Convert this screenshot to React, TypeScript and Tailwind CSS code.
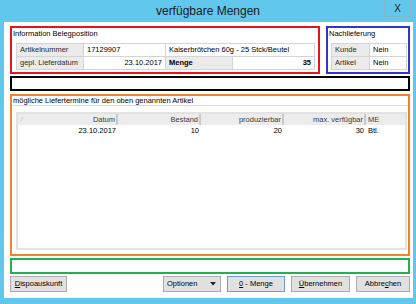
import React from 'react';

const Cell: React.FC<{ label?: boolean; right?: boolean; bold?: boolean; span?: boolean; children?: React.ReactNode }> = ({ label, right, bold, span, children }) => (
  <div
    className={`h-[13px] leading-[12px] px-[3px] border-r border-b border-[#d4d4d4] whitespace-nowrap overflow-hidden ${
      label ? 'bg-[#ebebeb] text-[#2a2a2a]' : 'bg-white text-black'
    } ${right ? 'text-right' : ''} ${bold ? 'font-bold' : ''} ${span ? 'col-span-2' : ''}`}
  >
    {children}
  </div>
);

const Btn: React.FC<{ w: string; focus?: boolean; children: React.ReactNode }> = ({ w, focus, children }) => (
  <div
    className={`${w} h-[16px] flex items-center justify-center bg-[#e1e1e1] border ${
      focus ? 'border-[#6f9cce]' : 'border-[#adadad]'
    } text-black`}
  >
    {children}
  </div>
);

const headCols = [
  { t: 'Datum', w: 'w-[100px]' },
  { t: 'Bestand', w: 'w-[83px]' },
  { t: 'produzierbar', w: 'w-[83px]' },
  { t: 'max. verfügbar', w: 'w-[82px]' },
];

export default function App() {
  return (
    <div className="w-[416px] h-[304px] bg-[#62c7ec] flex flex-col overflow-hidden font-['Liberation_Sans',Arial,sans-serif] text-[7.5px] text-black">
      {/* title bar */}
      <div className="h-[22px] flex items-start shrink-0">
        <div className="w-[32px]" />
        <div className="flex-1 text-center text-[12px] leading-[22px] text-[#1a1a1a]">verfügbare Mengen</div>
        <div className="w-[32px] pr-[5px]">
          <div className="w-[27px] h-[17px] border border-[#86b8cc] border-t-0 flex items-center justify-center text-[10px] text-[#222]">
            X
          </div>
        </div>
      </div>

      {/* body */}
      <div className="ml-[4px] mr-[3px] mb-[6px] flex-1 bg-white flex flex-col pl-[6px] pr-[3px] pt-[4px] pb-[6px]">
        <div className="flex gap-[6px] h-[48px]">
          <div className="w-[310px] border-2 border-[#e3141c] flex flex-col">
            <div className="h-[11px] leading-[11px] pl-[1px]">Information Belegposition</div>
            <div className="mt-[4px] ml-[4px] mr-[3px] grid grid-cols-[67px_82px_67px_1fr] border-t border-l border-[#d4d4d4]">
              <Cell label>Artikelnummer</Cell>
              <Cell>17129907</Cell>
              <Cell span>Kaiserbrötchen 60g - 25 Stck/Beutel</Cell>
              <Cell label>gepl. Lieferdatum</Cell>
              <Cell right>23.10.2017</Cell>
              <Cell label bold>
                <span className="text-black">Menge</span>
              </Cell>
              <Cell right bold>35</Cell>
            </div>
          </div>
          <div className="flex-1 border-2 border-[#3334c9] flex flex-col">
            <div className="h-[11px] leading-[11px] pl-[1px]">Nachlieferung</div>
            <div className="mt-[4px] ml-[3px] mr-[1px] grid grid-cols-[38px_1fr] border-t border-l border-[#d4d4d4]">
              <Cell label>Kunde</Cell>
              <Cell>Nein</Cell>
              <Cell label>Artikel</Cell>
              <Cell>Nein</Cell>
            </div>
          </div>
        </div>

        <div className="mt-[2px] h-[15px] border-2 border-black" />

        <div className="mt-[3px] h-[162px] border-2 border-[#f4812c] flex flex-col">
          <div className="h-[9px] leading-[9px] pl-[1px]">mögliche Liefertermine für den oben genannten Artikel</div>
          <div className="flex-1 border-t border-[#d9d9d9] pt-[6px] pl-[4px] pr-[1px] pb-[4px] flex">
            <div className="flex-1 border-2 border-[#e2e2e2] flex flex-col">
              <div className="h-[11px] flex bg-[#ececec] text-[#3d3d3d] leading-[11px]">
                {headCols.map((c, i) => (
                  <div key={c.t} className={`${c.w} relative text-right pr-[1px] border-r-2 border-[#c9c9c9]`}>
                    {i === 0 && <span className="absolute left-[3px] top-0 text-[6px] text-[#aaa]">/</span>}
                    {c.t}
                  </div>
                ))}
                <div className="flex-1 pl-[2px]">ME</div>
              </div>
              <div className="h-[12px] flex leading-[12px] text-black">
                <div className="w-[100px] text-right pr-[2px]">23.10.2017</div>
                <div className="w-[83px] text-right pr-[2px]">10</div>
                <div className="w-[83px] text-right pr-[2px]">20</div>
                <div className="w-[82px] text-right pr-[2px]">30</div>
                <div className="flex-1 pl-[2px]">Btl.</div>
              </div>
            </div>
          </div>
        </div>

        <div className="mt-[2px] h-[16px] border-2 border-[#22b14c]" />

        <div className="mt-[2px] h-[16px] flex">
          <Btn w="w-[57px]">
            <span>
              <span className="underline">D</span>ispoauskunft
            </span>
          </Btn>
          <div className="flex-1" />
          <div className="w-[58px] h-[16px] flex items-center bg-[#e1e1e1] border border-[#adadad] pl-[3px] pr-[4px]">
            <span className="flex-1">Optionen</span>
            <svg width="6" height="4" viewBox="0 0 6 4">
              <path d="M0 0 H6 L3 3.5 Z" fill="#222" />
            </svg>
          </div>
          <div className="w-[6px]" />
          <Btn w="w-[58px]" focus>
            <span>
              <span className="underline">0</span> - Menge
            </span>
          </Btn>
          <div className="w-[6px]" />
          <Btn w="w-[59px]">
            <span>
              <span className="underline">Ü</span>bernehmen
            </span>
          </Btn>
          <div className="w-[6px]" />
          <Btn w="w-[54px]">
            <span>
              Abbre<span className="underline">c</span>hen
            </span>
          </Btn>
        </div>
      </div>
    </div>
  );
}
